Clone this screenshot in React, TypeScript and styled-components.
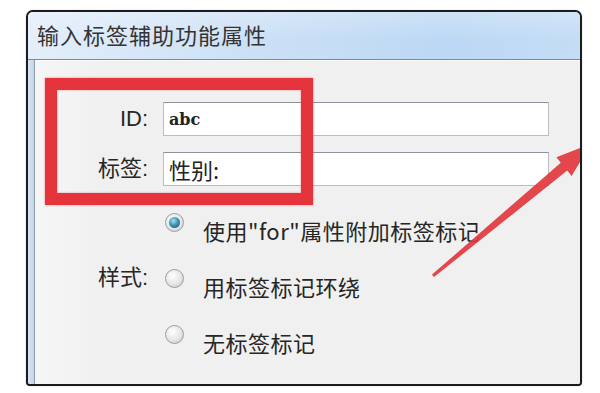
import React from 'react';
import styled, { createGlobalStyle } from 'styled-components';

const GlobalStyle = createGlobalStyle`
  html, body {
    margin: 0;
    padding: 0;
    background: #ffffff;
  }
  body {
    width: 600px;
    height: 393px;
    overflow: hidden;
    font-family: "Liberation Sans", "Noto Sans CJK SC", sans-serif;
  }
`;

const Page = styled.div`
  padding: 10px 18px 11px 26px;
  box-sizing: border-box;
  width: 600px;
  height: 393px;
`;

const Window = styled.div`
  position: relative;
  height: 100%;
  border: 2px solid #1c1c1c;
  border-radius: 7px 7px 4px 4px;
  overflow: hidden;
  display: flex;
  flex-direction: column;
  background: #f0f0f0;
  box-shadow: 0 0 1px rgba(0, 0, 0, 0.5);
`;

const TitleBar = styled.div`
  height: 48px;
  flex-shrink: 0;
  display: flex;
  align-items: center;
  padding: 0 0 4px 9px;
  box-sizing: border-box;
  background:
    linear-gradient(180deg, rgba(255, 255, 255, 0.25), rgba(255, 255, 255, 0) 60%),
    linear-gradient(90deg, #e3eefa 0%, #cfe2f6 35%, #bcd8f4 75%, #c4dcf6 100%);
  border-bottom: 1px solid #7d8b98;
  font-family: "Noto Sans CJK SC", sans-serif;
  font-size: 22px;
  letter-spacing: 1px;
  color: #333;
`;

const Body = styled.div`
  flex: 1;
  display: flex;
`;

const FrameEdge = styled.div`
  width: 6px;
  flex-shrink: 0;
  background: linear-gradient(90deg, #d6e4f1, #c3d7ea);
  border-right: 1px solid #8e9aa6;
`;

const Content = styled.div`
  flex: 1;
  padding: 41px 31px 0 1px;
  border-top: 1px solid #fafafa;
  background: linear-gradient(90deg, #f6f6f6 0%, #f0f0f0 12%);
`;

const FieldGrid = styled.div`
  display: grid;
  grid-template-columns: 112px 1fr;
  column-gap: 15px;
  row-gap: 16px;
  align-items: center;
`;

const FieldLabel = styled.div<{ $row?: number; $lift?: number }>`
  grid-column: 1;
  ${p => (p.$row ? `grid-row: ${p.$row};` : '')}
  text-align: right;
  font-family: "Liberation Sans", "Noto Sans CJK SC", sans-serif;
  font-size: 22px;
  line-height: 1;
  color: #262626;
  transform: translateY(${p => p.$lift ?? 0}px);
`;

const TextBox = styled.div<{ $code?: boolean }>`
  height: 34px;
  box-sizing: border-box;
  display: flex;
  align-items: center;
  padding-left: 5px;
  background: #ffffff;
  border: 1px solid #b9bec4;
  border-top-color: #8e949b;
  font-family: ${p =>
    p.$code ? '"DejaVu Serif", "Liberation Serif", serif' : '"Noto Sans CJK SC", sans-serif'};
  font-size: ${p => (p.$code ? '16px' : '22px')};
  font-weight: ${p => (p.$code ? 700 : 400)};
  color: #222;
`;

const StyleGrid = styled.div`
  display: grid;
  grid-template-columns: 112px 1fr;
  grid-template-rows: repeat(3, 56px);
  column-gap: 15px;
  margin-top: 16px;
  align-items: center;
`;

const OptionRow = styled.div<{ $row: number }>`
  grid-column: 2;
  grid-row: ${p => p.$row};
  display: flex;
  align-items: center;
  gap: 19px;
  padding-left: 2px;
`;

const Radio = styled.span<{ $checked?: boolean }>`
  width: 19px;
  height: 19px;
  flex-shrink: 0;
  border-radius: 50%;
  box-sizing: border-box;
  border: 1px solid #9a9ea3;
  transform: translateY(-8px);
  display: flex;
  align-items: center;
  justify-content: center;
  background: radial-gradient(circle at 40% 35%, #ffffff 0%, #e6e6e6 55%, #c4c4c4 100%);

  &::after {
    content: '';
    display: ${p => (p.$checked ? 'block' : 'none')};
    width: 11px;
    height: 11px;
    border-radius: 50%;
    background: radial-gradient(circle at 40% 35%, #a8e2f2 0%, #3e95b5 45%, #17506a 100%);
  }
`;

const OptionText = styled.span`
  font-family: "Noto Sans CJK SC", sans-serif;
  font-size: 22px;
  line-height: 1;
  color: #262626;
  letter-spacing: 0.5px;
`;

const Highlight = styled.div`
  position: absolute;
  left: 17px;
  top: 66px;
  width: 268px;
  height: 127px;
  box-sizing: border-box;
  border: 12px solid #e5343b;
  box-shadow: 0 0 2px rgba(229, 52, 59, 0.6), inset 0 0 2px rgba(229, 52, 59, 0.6);
  pointer-events: none;
`;

const Arrow = styled.svg`
  position: absolute;
  left: 0;
  top: 0;
  width: 100%;
  height: 100%;
  pointer-events: none;
`;

const options = [
  { text: '使用"for"属性附加标签标记', checked: true },
  { text: '用标签标记环绕', checked: false },
  { text: '无标签标记', checked: false },
];

export default function App() {
  return (
    <>
      <GlobalStyle />
      <Page>
        <Window>
          <TitleBar>输入标签辅助功能属性</TitleBar>
          <Body>
            <FrameEdge />
            <Content>
              <FieldGrid>
                <FieldLabel>ID:</FieldLabel>
                <TextBox $code>abc</TextBox>
                <FieldLabel>标签:</FieldLabel>
                <TextBox>性别:</TextBox>
              </FieldGrid>
              <StyleGrid>
                <FieldLabel $row={2} $lift={-8}>样式:</FieldLabel>
                {options.map((o, i) => (
                  <OptionRow key={o.text} $row={i + 1}>
                    <Radio $checked={o.checked} />
                    <OptionText>{o.text}</OptionText>
                  </OptionRow>
                ))}
              </StyleGrid>
            </Content>
          </Body>
          <Highlight />
          <Arrow viewBox="0 0 552 368" preserveAspectRatio="none">
            <polygon
              points="404,259.8 532.8,149.1 528.4,143.7 563,130.4 543.6,162.3 539.2,156.9 406,262.2"
              fill="#e2373d"
              opacity="0.92"
            />
          </Arrow>
        </Window>
      </Page>
    </>
  );
}
